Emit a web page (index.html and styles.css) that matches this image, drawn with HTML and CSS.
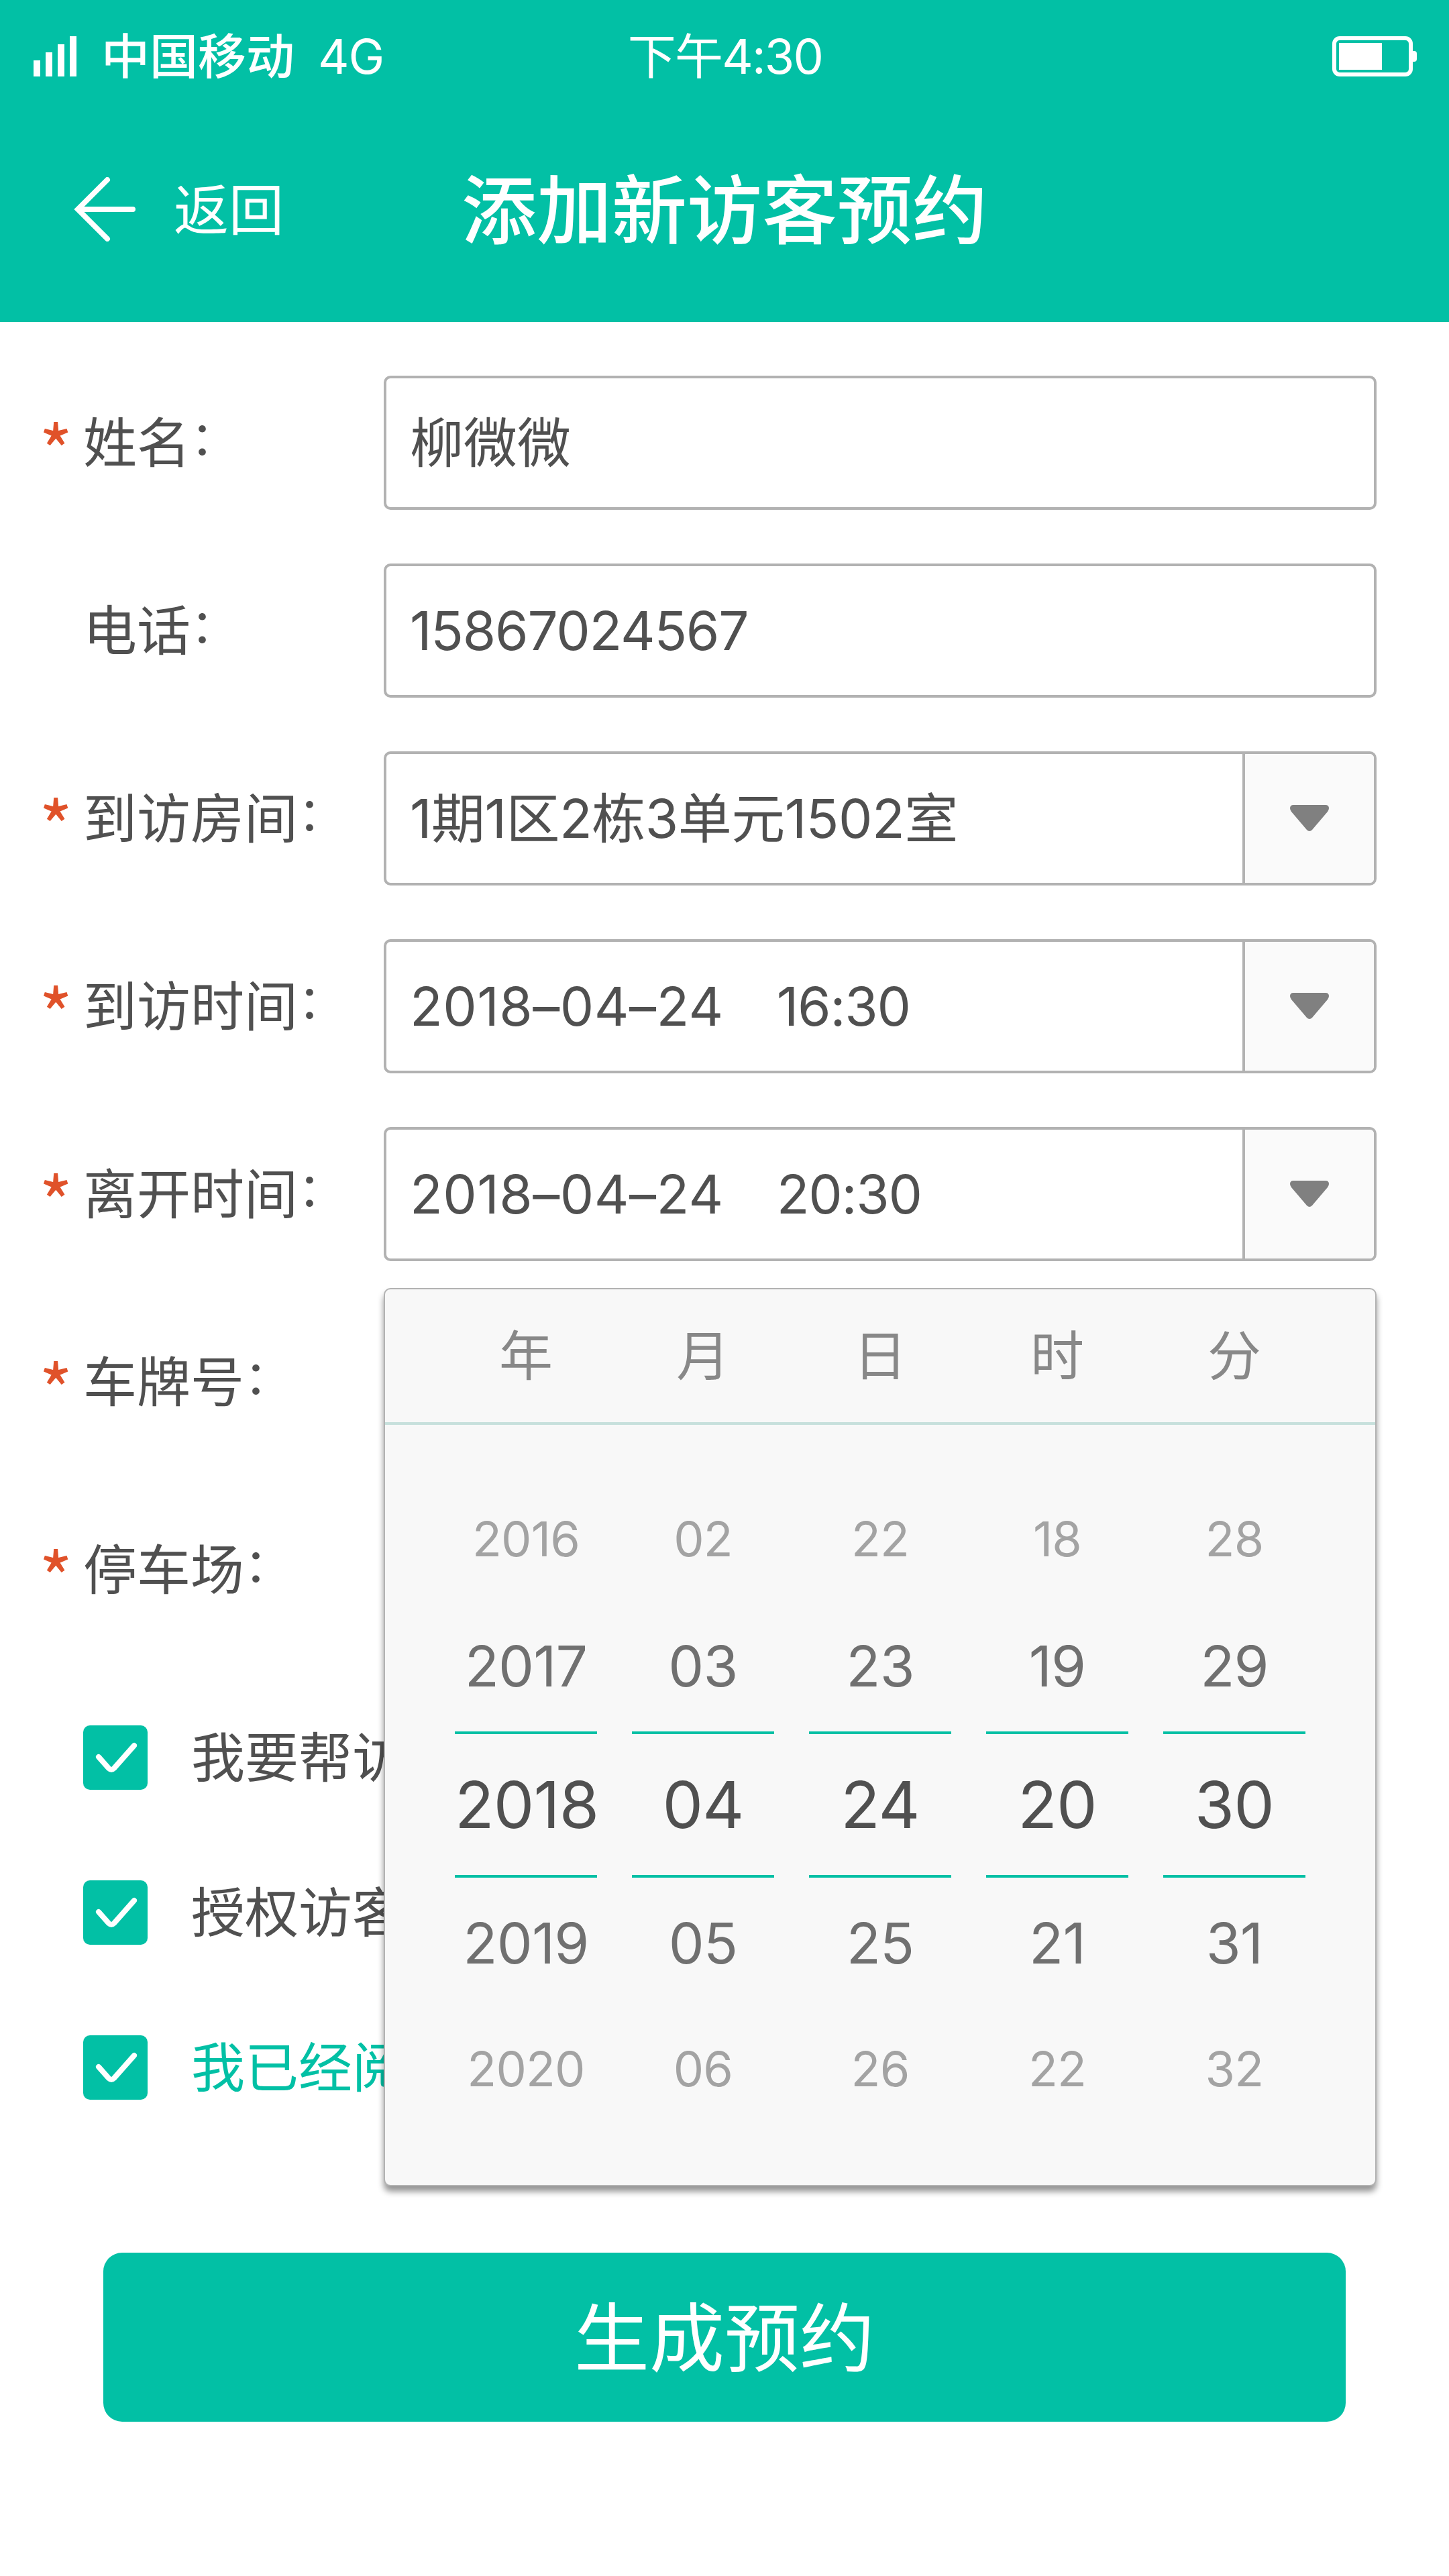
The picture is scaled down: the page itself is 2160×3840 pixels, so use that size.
FILE: index.html
```html
<!DOCTYPE html>
<html lang="zh-CN">
<head>
<meta charset="utf-8">
<title>添加新访客预约</title>
<link rel="stylesheet" href="styles.css">
</head>
<body>
<header class="header">
  <div class="status">
    <div class="carrier">
      <svg class="signal" width="64" height="60" viewBox="0 0 64 60" fill="#fff"><path d="M0 36h10v24H0zM18 24h10v36H18zM36 12h10v48H36zM54 0h10v60H54z"/></svg>
      <span class="operator">中国移动</span>
      <span class="network">4G</span>
    </div>
    <div class="clock">下午4:30</div>
    <svg class="battery" width="126" height="60" viewBox="0 0 126 60" fill="#fff"><rect x="3" y="3" width="114" height="54" rx="8" fill="none" stroke="#fff" stroke-width="6"/><rect x="10" y="10" width="64" height="40"/><path d="M120 22h2a4 4 0 0 1 4 4v8a4 4 0 0 1-4 4h-2z"/></svg>
  </div>
  <nav class="nav">
    <a class="back">
      <svg width="96" height="96" viewBox="0 0 96 96" fill="none" stroke="#fff" stroke-width="8" stroke-linecap="round" stroke-linejoin="miter"><path d="M52 4L8 48l44 44M10 48h80"/></svg>
      <span class="back-text">返回</span>
    </a>
    <h1 class="title">添加新访客预约</h1>
  </nav>
</header>

<main class="form">
  <div class="row">
    <span class="star">*</span><label class="label">姓名<span class="colon">：</span></label>
    <div class="field"><div class="value">柳微微</div></div>
  </div>
  <div class="row">
    <span class="star"></span><label class="label">电话<span class="colon">：</span></label>
    <div class="field"><div class="value phone">15867024567</div></div>
  </div>
  <div class="row">
    <span class="star">*</span><label class="label">到访房间<span class="colon">：</span></label>
    <div class="field"><div class="value room">1期1区2栋3单元1502室</div>
      <div class="toggle"><svg width="60" height="40" viewBox="0 0 60 40"><path d="M6 0h48q5 0 5 5 0 2-2 5L34 37q-4 4-8 0L3 10Q1 7 1 5q0-5 5-5z" fill="#808080"/></svg></div></div>
  </div>
  <div class="row">
    <span class="star">*</span><label class="label">到访时间<span class="colon">：</span></label>
    <div class="field"><div class="value date"><span class="day">2018–04–24</span><span class="time">16:30</span></div>
      <div class="toggle"><svg width="60" height="40" viewBox="0 0 60 40"><path d="M6 0h48q5 0 5 5 0 2-2 5L34 37q-4 4-8 0L3 10Q1 7 1 5q0-5 5-5z" fill="#808080"/></svg></div></div>
  </div>
  <div class="row">
    <span class="star">*</span><label class="label">离开时间<span class="colon">：</span></label>
    <div class="field"><div class="value date"><span class="day">2018–04–24</span><span class="time">20:30</span></div>
      <div class="toggle"><svg width="60" height="40" viewBox="0 0 60 40"><path d="M6 0h48q5 0 5 5 0 2-2 5L34 37q-4 4-8 0L3 10Q1 7 1 5q0-5 5-5z" fill="#808080"/></svg></div>
      <div class="picker">
        <div class="picker-head"><span>年</span><span>月</span><span>日</span><span>时</span><span>分</span></div>
        <div class="wheels">
          <div class="wheel"><span class="far">2016</span><span class="near">2017</span><span class="current">2018</span><span class="near">2019</span><span class="far">2020</span></div>
          <div class="wheel"><span class="far">02</span><span class="near">03</span><span class="current">04</span><span class="near">05</span><span class="far">06</span></div>
          <div class="wheel"><span class="far">22</span><span class="near">23</span><span class="current">24</span><span class="near">25</span><span class="far">26</span></div>
          <div class="wheel"><span class="far">18</span><span class="near">19</span><span class="current">20</span><span class="near">21</span><span class="far">22</span></div>
          <div class="wheel"><span class="far">28</span><span class="near">29</span><span class="current">30</span><span class="near">31</span><span class="far">32</span></div>
        </div>
      </div>
    </div>
  </div>
  <div class="row"><span class="star">*</span><label class="label">车牌号<span class="colon">：</span></label></div>
  <div class="row"><span class="star">*</span><label class="label">停车场<span class="colon">：</span></label></div>

  <div class="options">
    <label class="option"><span class="box"><svg viewBox="0 0 96 96"><path d="M23 47L38 64q4 4 8 0L76 30"/></svg></span>我要帮访</label>
    <label class="option"><span class="box"><svg viewBox="0 0 96 96"><path d="M23 47L38 64q4 4 8 0L76 30"/></svg></span>授权访客</label>
    <label class="option agree"><span class="box"><svg viewBox="0 0 96 96"><path d="M23 47L38 64q4 4 8 0L76 30"/></svg></span>我已经阅</label>
  </div>
  <button class="submit">生成预约</button>
</main>
</body>
</html>
```
FILE: styles.css
```css
* { box-sizing: border-box; }

body {
  margin: 0;
  width: 2160px;
  height: 3840px;
  overflow: hidden;
  background: #fff;
  color: #505050;
  font-family: Inter, "Noto Sans CJK SC", sans-serif;
  font-size: 80px;
  line-height: 1;
}

.header { height: 480px; background: #02c0a5; color: #fff; }

.status {
  display: grid;
  grid-template-columns: 1fr auto 1fr;
  align-items: center;
  height: 168px;
  padding: 0 48px 0 50px;
  font-size: 72px;
}
.carrier { display: flex; align-items: center; }
.operator { margin-left: 37px; font-weight: 500; }
.network { margin-left: 35px; letter-spacing: -1px; }
.clock { letter-spacing: -1.8px; }
.battery { justify-self: end; }

.nav {
  display: grid;
  grid-template-columns: 1fr auto 1fr;
  align-items: center;
  height: 288px;
  padding: 0 108px;
}
.back { display: flex; align-items: center; gap: 55px; }
.back-text { padding-top: 3px; font-size: 82px; }
.title { margin: 0; padding-top: 4px; font-size: 112px; font-weight: 500; }

.form { display: flex; flex-direction: column; padding: 80px 108px 0 62px; }

.row { display: flex; align-items: center; height: 200px; margin-bottom: 80px; }
.star {
  width: 66px;
  margin-left: -4px;
  padding-top: 16px;
  color: #e0522a;
  font: 108px/1 "Noto Sans CJK SC", sans-serif;
}
.label { width: 448px; white-space: nowrap; }
.colon { font-size: 70px; line-height: 0; vertical-align: 10px; }

.field {
  position: relative;
  display: flex;
  width: 1480px;
  height: 200px;
  border: 4px solid #b2b2b2;
  border-radius: 10px;
}
.value { flex: 1; display: flex; align-items: center; padding-left: 35px; }
.phone { letter-spacing: -1.2px; }
.room { letter-spacing: -.5px; }
.date { gap: 79px; }
.day { letter-spacing: .5px; }
.time { letter-spacing: -1.2px; }
.toggle {
  display: flex;
  align-items: center;
  justify-content: center;
  width: 196px;
  border-left: 4px solid #b2b2b2;
  border-radius: 0 6px 6px 0;
  background: #fafafa;
}

/* Date wheel that drops below the field */
.picker {
  position: absolute;
  z-index: 2;
  top: 236px;
  left: -4px;
  width: 1480px;
  height: 1339px;
  border: 2px solid #b2b2b2;
  border-radius: 10px;
  background: #f8f8f8;
  box-shadow: 0 8px 10px rgba(0, 0, 0, .42);
}
.picker-head,
.wheels {
  display: grid;
  grid-template-columns: repeat(5, 212px);
  column-gap: 52px;
  padding-left: 104px;
  text-align: center;
}
.picker-head {
  height: 202px;
  align-items: center;
  border-bottom: 4px solid #c7e0dc;
  color: #888;
}
.wheels { padding-top: 80px; letter-spacing: -.01em; }
.wheel { display: flex; flex-direction: column; }
.far { height: 182px; color: #a3a3a3; font-size: 72px; line-height: 180px; }
.near { height: 195px; color: #707070; font-size: 84px; line-height: 195px; }
.current {
  height: 218px;
  border: solid #02c0a5;
  border-width: 4px 0;
  font-size: 96px;
  line-height: 210px;
}

.options { display: flex; flex-direction: column; gap: 135px; padding: 52px 0 0 62px; }
.option { display: flex; align-items: center; gap: 65px; height: 96px; }
.agree { color: #02c0a5; }
.box { width: 96px; height: 96px; border-radius: 10px; background: #02c0a5; }
.box svg {
  display: block;
  fill: none;
  stroke: #fff;
  stroke-width: 8;
  stroke-linecap: round;
}

.submit {
  width: 1852px;
  height: 252px;
  margin: 228px 0 0 92px;
  padding: 4px 0 0;
  border: 0;
  border-radius: 28px;
  background: #02c0a5;
  color: #fff;
  font: inherit;
  font-size: 112px;
}
```
